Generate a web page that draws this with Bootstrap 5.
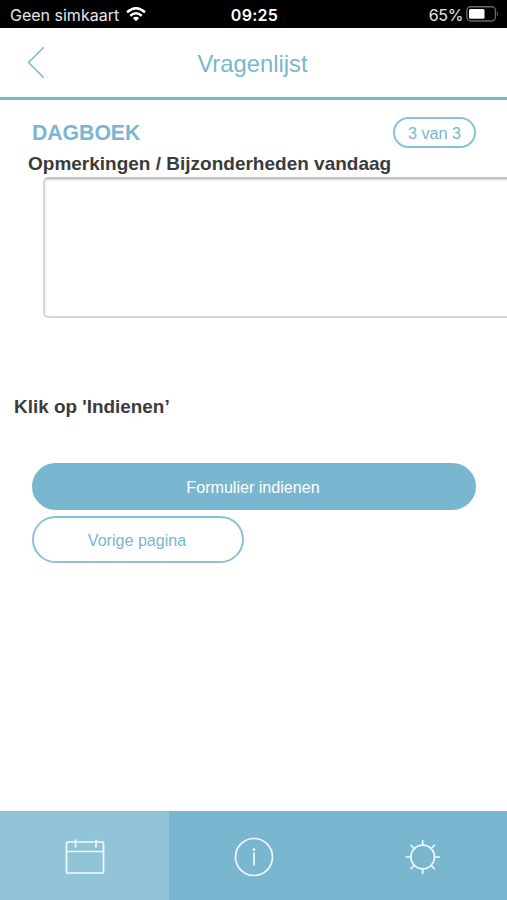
<!DOCTYPE html>
<html lang="nl">
<head>
<meta charset="utf-8">
<meta name="viewport" content="width=device-width, initial-scale=1">
<title>Vragenlijst</title>
<link rel="stylesheet" href="https://cdn.jsdelivr.net/npm/bootstrap@5.3.0/dist/css/bootstrap.min.css">
<style>
:root { --brand: #79b6d0; --brand-light: #92c4d7; --brand-edge: #8cc1d8; }
body { font-family: "Liberation Sans", Arial, sans-serif; color: #3b3b3b; }
.screen { height: 900px; }
.statusbar { height: 28px; padding: 2px 8px 0 10px; background: #000; color: #e6e6e6; font: 400 16px/26px Inter, sans-serif; }
.clock { font-weight: 600; color: #fff; letter-spacing: .3px; }
.carrier { letter-spacing: 0; }
.charge { letter-spacing: -.4px; }
.wifi { margin: 0 0 2px 7px; }
.battery { margin: 0 0 2px 3px; }
.titlebar { height: 72px; border-bottom: 3px solid var(--brand); padding: 0 29px 0 27px; }
.titlebar h1 { font-size: 23.8px; line-height: 28px; color: var(--brand); margin-top: 2px; }
.side { width: 60px; }
.form-head { padding: 17px 31px 0 32px; height: 52px; }
.form-head h2 { font-size: 21.2px; line-height: 32px; color: var(--brand); }
.step { width: 83px; height: 31px; border: 2px solid var(--brand-edge); color: var(--brand); font-size: 16.2px; padding-top: 1px; }
.question { font-size: 19px; line-height: 23px; padding-left: 28px; height: 25px; }
.answer { margin-left: 43px; width: 480px; height: 141px; min-height: 0; resize: none; border: 2px solid #d6d6d6; border-top-color: #c4c4c4; border-radius: 5px; box-shadow: inset 0 1px 2px #ccc; }
.hint { font-size: 18.9px; line-height: 22px; margin: 78px 0 0 14px; }
.actions { padding: 45px 31px 0 32px; gap: 6px; }
.pill { height: 47px; font-size: 16.1px; border: 2px solid var(--brand); padding: 2px 2px 0 0; line-height: 1; }
.pill-fill, .pill-fill:hover { background: var(--brand); color: #fff; }
.pill-line { width: 212px; color: var(--brand); border-color: var(--brand-edge); }
.tabs { height: 89px; background: var(--brand); }
.tab-on { background: var(--brand-light); }
.tabs svg, .titlebar svg { fill: none; stroke-linecap: round; stroke-linejoin: round; }
.tabs svg { stroke: #edfaff; stroke-width: 1.7; margin-top: 3px; }
</style>
<script src="https://cdn.jsdelivr.net/npm/bootstrap@5.3.0/dist/js/bootstrap.bundle.min.js"></script>
</head>
<body class="bg-white overflow-hidden">
<div class="screen d-flex flex-column overflow-hidden">
  <div class="statusbar row g-0 flex-shrink-0">
    <div class="col d-flex align-items-center"><span class="carrier">Geen simkaart</span>
      <svg class="wifi" width="20" height="15" viewBox="0 0 20 15" fill="none" stroke="#fff" stroke-width="2.5"><path d="M1 5.3Q10-2.7 19 5.3M4.3 8.7Q10 3.7 15.7 8.7"/><path d="M10 14.2L6.9 11.1Q10 8.5 13.1 11.1Z" fill="#fff" stroke="none"/></svg>
    </div>
    <div class="col-auto clock">09:25</div>
    <div class="col d-flex align-items-center justify-content-end"><span class="charge">65%</span>
      <svg class="battery" width="33" height="16" viewBox="0 0 33 16"><rect x=".8" y=".8" width="28.7" height="14.2" rx="4" fill="none" stroke="#686868" stroke-width="1.4"/><rect x="3" y="3" width="15.5" height="9.8" rx="1.5" fill="#fff"/><path d="M31 5.5Q33 7.8 31 10Z" fill="#686868"/></svg>
    </div>
  </div>
  <header class="titlebar d-flex align-items-center flex-shrink-0">
    <a href="#" class="side" aria-label="Terug"><svg class="d-block" width="20" height="32" viewBox="0 0 20 32" stroke="#79b6d0" stroke-width="1.5"><path d="M16.3 .7L1.5 15.5L16.3 30.3"/></svg></a>
    <h1 class="flex-grow-1 text-center fw-normal mb-0">Vragenlijst</h1>
    <span class="side"></span>
  </header>
  <main class="flex-grow-1">
    <div class="form-head d-flex justify-content-between align-items-start">
      <h2 class="fw-bold mb-0">DAGBOEK</h2>
      <span class="step rounded-pill d-flex align-items-center justify-content-center">3 van 3</span>
    </div>
    <label class="question fw-bold d-block text-nowrap" for="notes">Opmerkingen / Bijzonderheden vandaag</label>
    <textarea class="answer form-control" id="notes"></textarea>
    <p class="hint fw-bold mb-0">Klik op 'Indienen’</p>
    <div class="actions d-flex flex-column">
      <button class="btn pill pill-fill rounded-pill w-100">Formulier indienen</button>
      <button class="btn pill pill-line rounded-pill">Vorige pagina</button>
    </div>
  </main>
  <nav class="tabs row g-0 flex-shrink-0">
    <a href="#" class="tab-on col d-flex align-items-center justify-content-center" aria-label="Agenda"><svg width="40" height="36" viewBox="0 0 40 36"><rect x="1.5" y="3" width="37" height="31" rx="1"/><path d="M1.5 12.5H38.5M10.5 1V8M31 1V8"/></svg></a>
    <a href="#" class="col d-flex align-items-center justify-content-center" aria-label="Informatie"><svg width="40" height="40" viewBox="0 0 40 40"><circle cx="20" cy="20" r="18.5"/><path d="M20 16.2V28"/><circle cx="20" cy="12.6" r=".6"/></svg></a>
    <a href="#" class="col d-flex align-items-center justify-content-center" aria-label="Instellingen"><svg width="36" height="36" viewBox="0 0 36 36"><circle cx="17.7" cy="18" r="11.8"/><path d="M17.7 1.5V6M17.7 30V34.5M1.2 18H5.8M29.6 18H34.2M6.1 6.4L9.2 9.5M26.2 26.5L29.3 29.6M6.1 29.6L9.2 26.5M26.2 9.5L29.3 6.4"/></svg></a>
  </nav>
</div>
</body>
</html>
